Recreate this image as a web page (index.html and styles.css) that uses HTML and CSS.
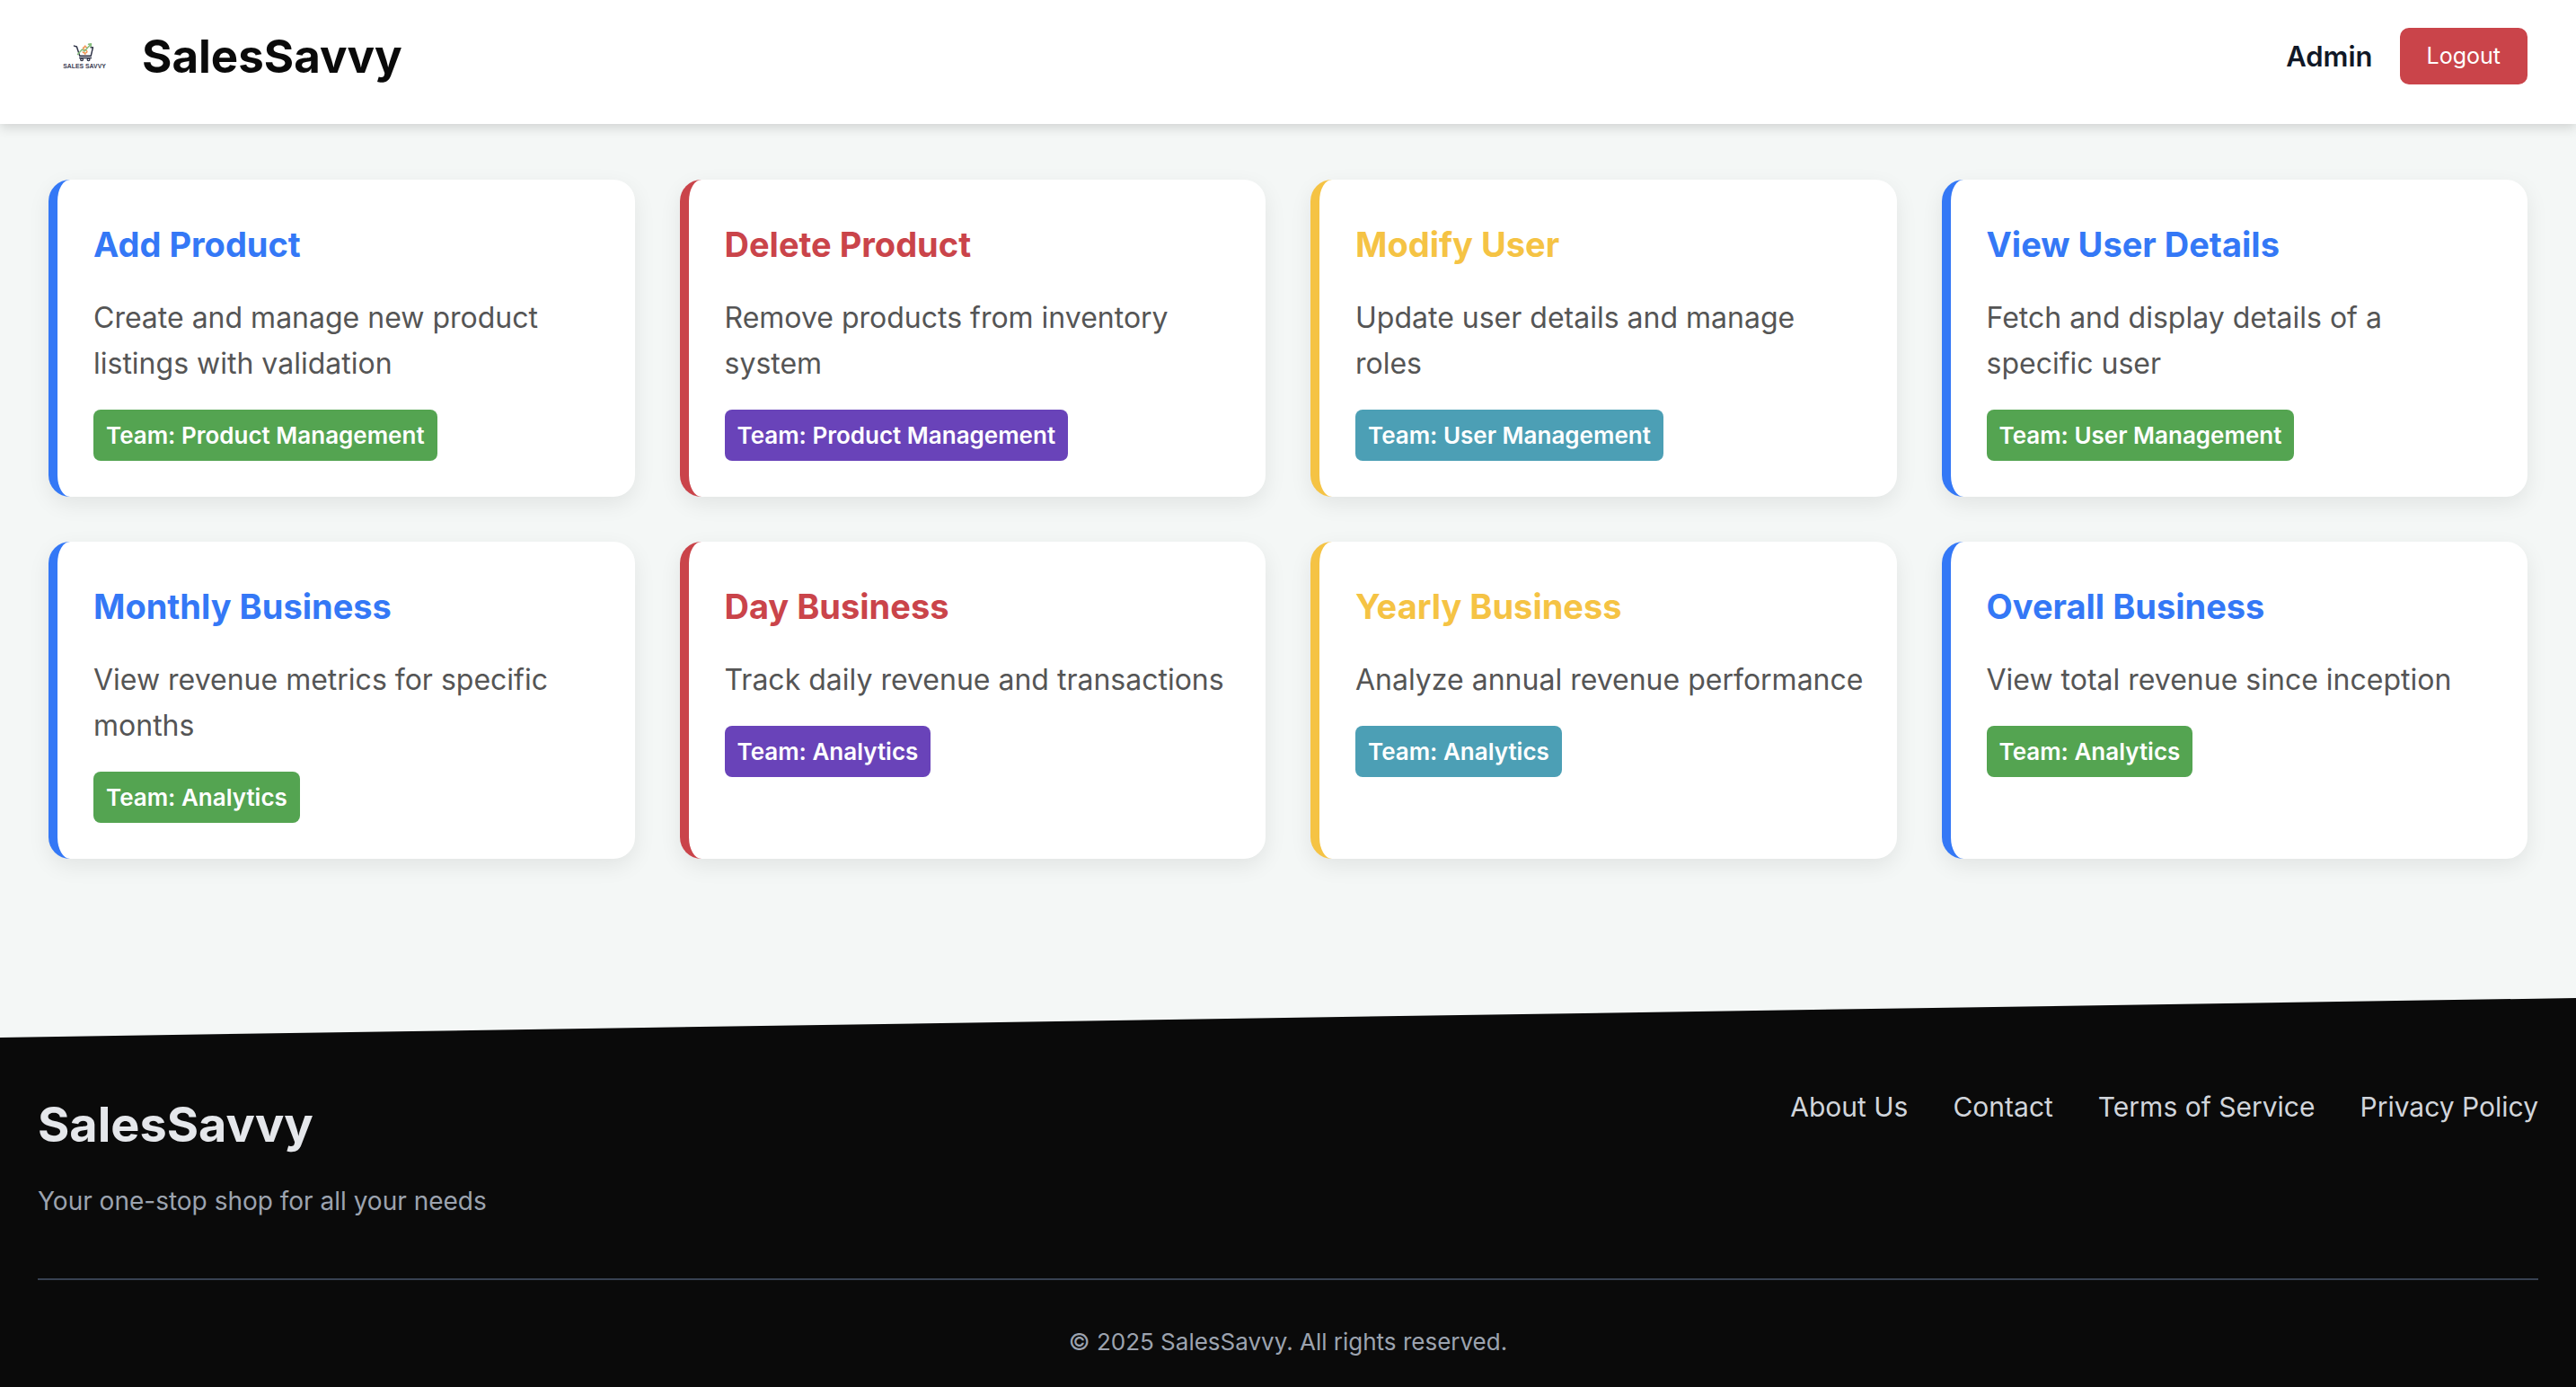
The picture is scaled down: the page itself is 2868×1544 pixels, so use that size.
FILE: index.html
```html
<!DOCTYPE html>
<html lang="en">
<head>
  <meta charset="utf-8">
  <meta name="viewport" content="width=device-width, initial-scale=1">
  <title>SalesSavvy Admin</title>
  <link rel="stylesheet" href="styles.css">
</head>
<body>
  <header class="header">
    <div class="header-brand">
      <svg class="logo" viewBox="0 0 80 64" role="img" aria-label="Sales Savvy">
        <g fill="none" stroke-linecap="round" stroke-linejoin="round">
          <path stroke="#2f3347" stroke-width="1.5" d="M28.3 20.4l3 1 3.4 10.4h12.6l2.3-9.6h-2.5M34.6 34h13"/>
          <circle stroke="#2f3347" stroke-width="1.3" cx="37" cy="35.8" r="1.4"/>
          <circle stroke="#2f3347" stroke-width="1.3" cx="44.6" cy="35.8" r="1.4"/>
          <path stroke="#f0914e" stroke-width="1.4" d="M42.8 22.4C41.6 20.9 38.4 21.4 38.6 23.2 38.8 25 43 24.6 43 26.8 43 28.8 39.5 29 38.2 27.5M40.8 20.2v1.4M40.8 28.6v1.4"/>
          <path stroke="#85bd7d" stroke-width="1.5" d="M32.4 30l5-5.6 2.6 2 7-7.6M44.6 18.6l3-.5-.3 3"/>
        </g>
        <text class="logo-text" x="40" y="46" text-anchor="middle">SALES SAVVY</text>
      </svg>
      <h1 class="header-title">SalesSavvy</h1>
    </div>
    <div class="header-user">
      <span class="user-name">Admin</span>
      <button class="logout" type="button">Logout</button>
    </div>
  </header>

  <main class="dashboard">
    <article class="card blue">
      <h2 class="card-title">Add Product</h2>
      <p class="card-text">Create and manage new product listings with validation</p>
      <span class="team green">Team: Product Management</span>
    </article>
    <article class="card red">
      <h2 class="card-title">Delete Product</h2>
      <p class="card-text">Remove products from inventory system</p>
      <span class="team purple">Team: Product Management</span>
    </article>
    <article class="card yellow">
      <h2 class="card-title">Modify User</h2>
      <p class="card-text">Update user details and manage roles</p>
      <span class="team teal">Team: User Management</span>
    </article>
    <article class="card blue">
      <h2 class="card-title">View User Details</h2>
      <p class="card-text">Fetch and display details of a specific user</p>
      <span class="team green">Team: User Management</span>
    </article>
    <article class="card blue">
      <h2 class="card-title">Monthly Business</h2>
      <p class="card-text">View revenue metrics for specific months</p>
      <span class="team green">Team: Analytics</span>
    </article>
    <article class="card red">
      <h2 class="card-title">Day Business</h2>
      <p class="card-text">Track daily revenue and transactions</p>
      <span class="team purple">Team: Analytics</span>
    </article>
    <article class="card yellow">
      <h2 class="card-title">Yearly Business</h2>
      <p class="card-text">Analyze annual revenue performance</p>
      <span class="team teal">Team: Analytics</span>
    </article>
    <article class="card blue">
      <h2 class="card-title">Overall Business</h2>
      <p class="card-text">View total revenue since inception</p>
      <span class="team green">Team: Analytics</span>
    </article>
  </main>

  <footer class="footer">
    <div class="footer-top">
      <div>
        <h2 class="footer-title">SalesSavvy</h2>
        <p class="footer-tagline">Your one-stop shop for all your needs</p>
      </div>
      <nav class="footer-links" aria-label="Footer">
        <a href="#about">About Us</a>
        <a href="#contact">Contact</a>
        <a href="#terms">Terms of Service</a>
        <a href="#privacy">Privacy Policy</a>
      </nav>
    </div>
    <p class="copyright">© 2025 SalesSavvy. All rights reserved.</p>
  </footer>
</body>
</html>
```
FILE: styles.css
```css
* {
  box-sizing: border-box;
  margin: 0;
}

body {
  display: flex;
  flex-direction: column;
  min-height: 100vh;
  background: #f4f7f6;
  color: #111827;
  font-family: Inter, "Liberation Sans", sans-serif;
}

.header {
  display: flex;
  align-items: center;
  justify-content: space-between;
  padding: 31px 54px 44px;
  background: #fff;
  box-shadow: 0 4px 12px rgba(0, 0, 0, 0.15);
}

.header-brand {
  display: flex;
  align-items: center;
  gap: 24px;
}

.logo {
  width: 80px;
  height: 63px;
}

.logo-text {
  fill: #3c4054;
  font: 700 7px "Liberation Sans", sans-serif;
}

.header-title {
  color: #0a0a0a;
  font-size: 51px;
  font-weight: 700;
  line-height: 62px;
}

.header-user {
  display: flex;
  align-items: center;
  gap: 30px;
}

.user-name {
  font-size: 31px;
  font-weight: 600;
  line-height: 48px;
}

.logout {
  padding: 0 30px;
  border: 0;
  border-radius: 10px;
  background: #ca444a;
  color: #fff;
  font-family: inherit;
  font-size: 25px;
  line-height: 63px;
}

.dashboard {
  display: grid;
  flex: 1 0 auto;
  grid-template-columns: repeat(auto-fit, minmax(560px, 1fr));
  align-content: start;
  gap: 50px;
  padding: 62px 54px 96px;
}

.card {
  padding: 40px 36px 40px 40px;
  border-left: 10px solid var(--accent);
  border-radius: 24px;
  background: #fff;
  box-shadow: 0 8px 24px rgba(0, 0, 0, 0.08);
}

.blue { --accent: #3478f6; }
.red { --accent: #ca444a; }
.yellow { --accent: #f5c344; }

.card-title {
  margin-bottom: 24px;
  color: var(--accent);
  font-size: 38px;
  font-weight: 700;
  line-height: 64px;
}

.card-text {
  margin-bottom: 26px;
  color: #555;
  font-size: 32px;
  line-height: 51px;
}

.team {
  display: block;
  width: fit-content;
  padding: 0 14px;
  border-radius: 8px;
  color: #fff;
  font-size: 26px;
  font-weight: 600;
  line-height: 57px;
}

.green { background: #54a451; }
.purple { background: #6943b9; }
.teal { background: #4c9fb5; }

.footer {
  padding: 96px 42px 29px;
  background: #0a0a0a;
  clip-path: polygon(0 44px, 100% 0, 100% 100%, 0 100%);
}

.footer-top {
  display: flex;
  align-items: flex-start;
  justify-content: space-between;
  gap: 48px;
  padding-bottom: 64px;
  border-bottom: 2px solid #374151;
}

.footer-title {
  margin-bottom: 18px;
  color: #e5e7eb;
  font-size: 54px;
  font-weight: 700;
  line-height: 90px;
}

.footer-tagline {
  color: #9ca3af;
  font-size: 28px;
  line-height: 44px;
}

.footer-links {
  display: flex;
  flex-wrap: wrap;
  gap: 0 50px;
}

.footer-links a {
  color: #d1d5db;
  font-size: 30px;
  line-height: 50px;
  text-decoration: none;
}

.copyright {
  padding-top: 48px;
  color: #9ca3af;
  font-size: 26px;
  line-height: 42px;
  text-align: center;
}
```
